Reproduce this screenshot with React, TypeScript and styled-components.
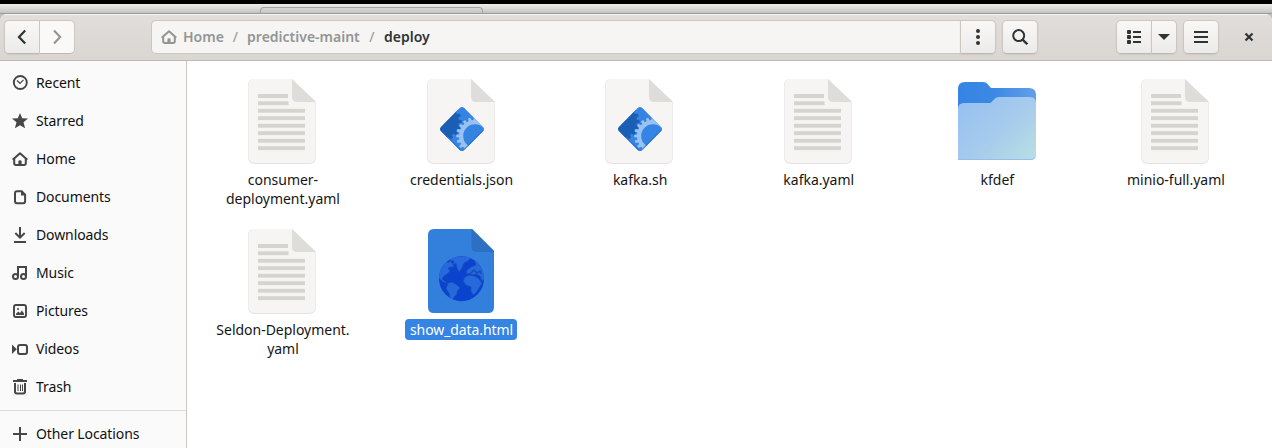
import React from 'react';
import styled, { createGlobalStyle, css } from 'styled-components';

const GlobalStyle = createGlobalStyle`
  * { box-sizing: border-box; }
  html, body { margin: 0; padding: 0; overflow: hidden; background: #000; }
  body { font-family: "Noto Sans", "Open Sans", sans-serif; font-size: 14px; color: #151515; }
`;

const Screen = styled.div`
  width: 1272px;
  height: 448px;
  padding-top: 4px;
  background: #000;
  display: flex;
  flex-direction: column;
  overflow: hidden;
`;

const Backdrop = styled.div`
  flex: 1;
  min-height: 0;
  display: flex;
  flex-direction: column;
  background: linear-gradient(#ececea 0, #dcdcda 4px, #c3c3c1 9px, #b5b5b3 20px);
`;

const BackTab = styled.div`
  height: 10px;
  flex: none;
  display: flex;
  align-items: flex-end;
  padding-left: 260px;
  border-bottom: 1px solid #9c9a97;

  &::before {
    content: "";
    width: 221px;
    height: 5px;
    border: 1px solid #a8a6a3;
    border-width: 1px 1px 0;
    border-radius: 4px 4px 0 0;
    background: linear-gradient(#d8d8d6, #c6c6c4);
  }
`;

const Window = styled.div`
  flex: 1;
  min-height: 0;
  display: flex;
  flex-direction: column;
  border-radius: 7px 7px 0 0;
  overflow: hidden;
  background: #fff;
`;

const HeaderBar = styled.header`
  height: 47px;
  flex: none;
  display: flex;
  align-items: flex-start;
  padding: 6px 10px 0 4px;
  border-bottom: 1px solid #bfb8b1;
  background: linear-gradient(#e1dedb, #dad6d2);
  box-shadow: inset 0 1px #f6f5f4;
`;

const ButtonGroup = styled.div<{ $gap?: number }>`
  display: flex;
  flex: none;
  margin-left: ${(p) => p.$gap ?? 0}px;
`;

const Button = styled.button<{ $w: number; $join?: 'left' | 'right'; $off?: boolean }>`
  width: ${(p) => p.$w}px;
  height: 34px;
  padding: 0;
  display: flex;
  align-items: center;
  justify-content: center;
  flex: none;
  border: 1px solid #cdc7c2;
  border-bottom-color: #bfb8b1;
  border-radius: 5px;
  color: ${(p) => (p.$off ? '#929595' : '#2e3436')};
  background: ${(p) => (p.$off ? '#faf9f8' : 'linear-gradient(#f9f8f7, #edebe9)')};
  box-shadow: ${(p) => (p.$off ? 'none' : '0 1px 2px rgba(0, 0, 0, 0.07)')};
  ${(p) => p.$join === 'left' && css`border-radius: 5px 0 0 5px; border-right-width: 0;`}
  ${(p) => p.$join === 'right' && css`border-radius: 0 5px 5px 0;`}
`;

const PathBar = styled.nav`
  width: 809px;
  height: 34px;
  display: flex;
  align-items: center;
  padding-left: 9px;
  border: 1px solid #cdc7c2;
  border-right: 0;
  border-radius: 5px 0 0 5px;
  background: #f6f5f4;
  color: #929595;
`;

const Crumb = styled.span<{ $gap?: number; $current?: boolean; $light?: boolean; $ls?: number }>`
  margin-left: ${(p) => p.$gap ?? 0}px;
  color: ${(p) => (p.$current ? '#2e3436' : 'inherit')};
  font-weight: ${(p) => (p.$light ? 400 : 600)};
  letter-spacing: ${(p) => p.$ls ?? 0}px;
  line-height: 20px;
`;

const Close = styled(ButtonGroup)`
  height: 34px;
  align-items: center;
  color: #2e3436;
`;

const Body = styled.div`
  flex: 1;
  min-height: 0;
  display: flex;
`;

const Sidebar = styled.aside`
  width: 187px;
  flex: none;
  padding-top: 3px;
  border-right: 1px solid #cdc7c2;
  background: #fafafa;
  overflow: hidden;
`;

const Place = styled.div`
  height: 38px;
  display: flex;
  align-items: center;
  gap: 8px;
  padding-left: 12px;
  color: #111;

  svg { color: #464646; flex: none; }
`;

const PlaceName = styled.span`
  padding-bottom: 2px;
  letter-spacing: -0.1px;
`;

const Divider = styled.div`
  height: 1px;
  margin: 4px 0;
  background: #dedede;
`;

const Files = styled.main`
  flex: 1;
  display: grid;
  grid-template-columns: repeat(6, 178.6px);
  grid-auto-rows: 150px;
  padding: 12px 0 0 6px;
  background: #fff;
`;

const FileItem = styled.figure`
  margin: 0;
  display: flex;
  flex-direction: column;
  align-items: center;

  svg { display: block; }
`;

const FileName = styled.figcaption<{ $selected?: boolean }>`
  margin-left: 0.3px;
  padding: 1px 4px 1px 5px;
  border-radius: 4px;
  text-align: center;
  line-height: 19px;
  white-space: pre-line;
  letter-spacing: ${(p) => (p.$selected ? -0.08 : -0.02)}px;
  color: ${(p) => (p.$selected ? '#fff' : '#151515')};
  background: ${(p) => (p.$selected ? '#3584e4' : 'transparent')};
`;

const glyphs = {
  back: <path d="M11.200 1.500 5 8l6.200 6.500" fill="none" stroke="currentColor" strokeWidth="2.200" />,
  forward: <path d="M5 1.500 11.200 8 5 14.500" fill="none" stroke="currentColor" strokeWidth="2.100" />,
  dots: (
    <g fill="currentColor">
      <circle cx="8" cy="2" r="2" /><circle cx="8" cy="8" r="2" /><circle cx="8" cy="14" r="2" />
    </g>
  ),
  search: (
    <g fill="none" stroke="currentColor">
      <circle cx="6.700" cy="6.600" r="5.500" strokeWidth="2" />
      <path d="M10.600 10.600 15.300 15.200" strokeWidth="2.400" />
    </g>
  ),
  list: (
    <g fill="currentColor">
      <rect x="1" y="1" width="4" height="4" rx="1" /><rect x="1" y="6" width="4" height="4" rx="1" />
      <rect x="1" y="11" width="4" height="4" rx="1" />
      <path d="M7 2h8v2H7zM7 7h8v2H7zM7 12h8v2H7z" />
    </g>
  ),
  down: <path d="M2 5h12L8 11z" fill="currentColor" />,
  menu: <path d="M1 2h14v2H1zM1 7h14v2H1zM1 12h14v2H1z" fill="currentColor" />,
  close: <path d="M4.500 4.500 11.500 11.500M11.500 4.500 4.500 11.500" stroke="currentColor" strokeWidth="2.200" fill="none" />,
  home: (
    <g fill="none" stroke="currentColor" strokeWidth="2">
      <path d="M.7 8.700 8 2.200l7.300 6.500" strokeLinejoin="round" />
      <path d="M2.200 8v4.300Q2.200 14 4 14h8q1.800 0 1.800-1.700V8" />
      <path d="M6.400 14v-3.500q0-1.200 1.600-1.200t1.600 1.200V14" fill="currentColor" stroke="none" />
    </g>
  ),
  recent: (
    <g fill="none" stroke="currentColor">
      <circle cx="8.300" cy="7.500" r="6.500" strokeWidth="1.900" />
      <path d="M5 5.500 8 8.300 11.500 4.800" strokeWidth="1.200" />
    </g>
  ),
  star: <path d="m8 0 2.200 5.300 5.800.3-4.500 3.700 1.600 6L8 12.200 2.900 15.300l1.600-6L0 5.600l5.800-.3z" fill="currentColor" />,
  documents: (
    <g>
      <path d="M5 1.900h4.700l3.400 3.400V12q0 2-2 2H5q-2 0-2-2V3.900q0-2 2-2z" transform="translate(0 .3)" fill="none" stroke="currentColor" strokeWidth="2" />
      <path d="M9 2v4.500h4z" fill="currentColor" />
    </g>
  ),
  downloads: <path d="M8 0v10M3.300 6 8 10.700 12.700 6M2 15h12" fill="none" stroke="currentColor" strokeWidth="2" />,
  music: (
    <g fill="none" stroke="currentColor" strokeWidth="2">
      <circle cx="3.500" cy="11.500" r="2.500" /><circle cx="11.500" cy="11.500" r="2.500" />
      <path d="M6 11.500V2h8v9.500" />
    </g>
  ),
  pictures: (
    <g>
      <rect x="2" y="2" width="12" height="12" rx="2" fill="none" stroke="currentColor" strokeWidth="1.900" />
      <path d="M4 12V10.800L6.300 8.600 8 10l2-2.500 2 3V12z" fill="currentColor" />
      <circle cx="6" cy="6" r="1" fill="currentColor" />
    </g>
  ),
  videos: (
    <g>
      <rect x="6" y="4" width="9" height="9" rx="2" fill="none" stroke="currentColor" strokeWidth="2" />
      <path d="M0 3.500 4.800 8.300 0 13z" fill="currentColor" />
    </g>
  ),
  trash: (
    <g fill="none" stroke="currentColor">
      <path d="M1 2h14" strokeWidth="2" /><path d="M5 .7h6" strokeWidth="1.400" />
      <path d="M3 4v8.500Q3 14.500 5 14.500h6q2 0 2-2V4" strokeWidth="2" />
      <path d="M6 5.500v6.500M8.500 5.500v6.500M10.500 5.500v6.500" strokeWidth="1" />
    </g>
  ),
  plus: <path d="M8 1v14M1 8h14" stroke="currentColor" strokeWidth="2" fill="none" />,
};

type GlyphName = keyof typeof glyphs;

const Glyph = ({ name }: { name: GlyphName }) => (
  <svg width="16" height="16" viewBox="0 0 16 16">{glyphs[name]}</svg>
);

const PAGE = 'M20 6H58L82 29V84Q82 91 75 91H21Q14 91 14 84V12Q14 6 20 6Z';
const FOLD = 'M58 6V24Q58 29 63 29H82Z';

const Page = ({ children }: { children: React.ReactNode }) => (
  <svg width="96" height="96" viewBox="0 0 96 96">
    <path d={PAGE} fill="#e4e3e1" />
    <path d="M20 6H58L81.500 28.500V83.500Q81.500 90 75 90H21Q14.500 90 14.500 83.500V12.500Q14.500 6.500 20 6Z" fill="#f6f5f4" />
    <path d={FOLD} fill="#deddda" />
    {children}
  </svg>
);

const TextIcon = () => (
  <Page>
    <g fill="#d5d4cf">
      <rect x="24" y="21" width="30" height="4" /><rect x="24" y="28.300" width="30.500" height="3.900" />
      {[35.8, 43.2, 50.8, 58.2, 65.8, 73.2].map((y) => (
        <rect key={y} x="24" y={y} width="47" height="3.900" />
      ))}
    </g>
  </Page>
);

const toothedRing = (cx: number, cy: number, inner: number, outer: number, count: number) => {
  const points: string[] = [];
  for (let i = 0; i < count; i++) {
    const steps: [number, number][] = [[-0.32, inner], [-0.22, outer], [0.22, outer], [0.32, inner]];
    steps.forEach(([offset, radius]) => {
      const a = ((i + offset) / count) * Math.PI * 2;
      points.push(`${(cx + Math.cos(a) * radius).toFixed(2)},${(cy + Math.sin(a) * radius).toFixed(2)}`);
    });
  }
  return points.join(' ');
};

const DIAMOND = 'M46.700 35.100Q49 32.800 51.300 35.100L70 53.900Q71.800 56 70 58.100L51.300 76.900Q49 79.200 46.700 76.900L28 58.100Q26.200 56 28 53.900Z';

const ScriptIcon = ({ id }: { id: string }) => (
  <Page>
    <clipPath id={id}><path d={DIAMOND} /></clipPath>
    <g clipPath={`url(#${id})`}>
      <rect x="24" y="32" width="50" height="48" fill="#3584e4" />
      <polygon points={toothedRing(29, 48.5, 16.8, 19.6, 18)} fill="#1a5fb4" />
      <polygon points={toothedRing(62, 63, 16, 18.8, 20)} fill="#99c1f1" />
      <circle cx="62" cy="63" r="11.800" fill="#3584e4" />
      <path d="M27 57 49 79 71 57" fill="none" stroke="#1c65c4" strokeWidth="1.600" opacity=".7" />
    </g>
  </Page>
);

const FolderIcon = () => (
  <svg width="96" height="96" viewBox="0 0 96 96">
    <defs>
      <linearGradient id="folderBack" x1="0" x2="1" y1="0" y2="0">
        <stop offset="0" stopColor="#3584e4" /><stop offset=".45" stopColor="#3c88e4" /><stop offset="1" stopColor="#629fea" />
      </linearGradient>
      <linearGradient id="folderFront" x1="0" x2="1" y1=".15" y2="1">
        <stop offset="0" stopColor="#98c1f1" /><stop offset=".5" stopColor="#a6cbec" /><stop offset="1" stopColor="#b9e0e4" />
      </linearGradient>
    </defs>
    <path d="M9 16Q9 9 16 9H34Q37 9 38.500 11L42 15H80Q87 15 87 22V45H9Z" fill="url(#folderBack)" />
    <path d="M9 36Q9 30 15 30H41.500L46 25.500Q47.500 24 50 24H81Q87 24 87 30V81Q87 87 81 87H9Z" fill="url(#folderFront)" />
    <path d="M9 86V87H81Q87 87 87 81V80Q87 86 81 86Z" fill="#96bdee" />
  </svg>
);

const WebIcon = () => (
  <svg width="96" height="96" viewBox="-1 0 96 96">
    <path d="M20 6H58L80 28V84Q80 90 74 90H20Q14 90 14 84V12Q14 6 20 6Z" fill="#337fdc" />
    <path d="M57.500 6V24Q57.500 29 62.500 29H80V28L58 6Z" fill="#2d70c2" />
    <clipPath id="globe"><circle cx="47.500" cy="55.700" r="22.500" /></clipPath>
    <g clipPath="url(#globe)">
      <rect x="24" y="33" width="48" height="48" fill="#0a43ce" />
      <g fill="#2569dc" stroke="#1b50b6" strokeWidth=".7">
        <path d="M28 41 33 37 34 40 36 38 39 41 40 44 36 44 34 45 36 48 33 51 30 53 28 56 33 60 29 59 24 54 22 47Z" />
        <path d="M33 37 39 33H59L54 38 50 40 48 45 45 49 43 45 42 40 39 42 40 38Z" />
        <path d="M34 60 38 59 43 62 46 65 43 68 43 71 40 74 39 78 36 75 35 70 32 66Z" />
        <path d="M52 51 53 47 57 44 62 42 60 37 65 41 70 49 72 55 68 58 66 53 62 51 58 52 56 50Z" />
        <path d="M51 54 55 52 60 53 64 55 68 60 65 65 62 70 59 72 57 68 57 64 52 62 49 58Z" />
      </g>
      <path d="M57 50 60 47 63 50 66 48 67 51" fill="none" stroke="#174db8" strokeWidth="1.500" />
    </g>
  </svg>
);

const places: { icon: GlyphName; label: string }[] = [
  { icon: 'recent', label: 'Recent' },
  { icon: 'star', label: 'Starred' },
  { icon: 'home', label: 'Home' },
  { icon: 'documents', label: 'Documents' },
  { icon: 'downloads', label: 'Downloads' },
  { icon: 'music', label: 'Music' },
  { icon: 'pictures', label: 'Pictures' },
  { icon: 'videos', label: 'Videos' },
  { icon: 'trash', label: 'Trash' },
];

const files: { name: string; kind: 'text' | 'script' | 'folder' | 'web' }[] = [
  { name: 'consumer-\ndeployment.yaml', kind: 'text' },
  { name: 'credentials.json', kind: 'script' },
  { name: 'kafka.sh', kind: 'script' },
  { name: 'kafka.yaml', kind: 'text' },
  { name: 'kfdef', kind: 'folder' },
  { name: 'minio-full.yaml', kind: 'text' },
  { name: 'Seldon-Deployment.\nyaml', kind: 'text' },
  { name: 'show_data.html', kind: 'web' },
];

const FileIcon = ({ kind, id }: { kind: string; id: string }) => {
  if (kind === 'script') return <ScriptIcon id={id} />;
  if (kind === 'folder') return <FolderIcon />;
  if (kind === 'web') return <WebIcon />;
  return <TextIcon />;
};

export default function App() {
  return (
    <Screen>
      <GlobalStyle />
      <Backdrop>
        <BackTab />
        <Window>
          <HeaderBar>
            <ButtonGroup>
              <Button $w={35} $join="left"><Glyph name="back" /></Button>
              <Button $w={36} $join="right" $off><Glyph name="forward" /></Button>
            </ButtonGroup>
            <ButtonGroup $gap={76}>
              <PathBar>
                <Glyph name="home" />
                <Crumb $gap={6}>Home</Crumb>
                <Crumb $gap={9} $light>/</Crumb>
                <Crumb $gap={9}>predictive-maint</Crumb>
                <Crumb $gap={9.500} $light>/</Crumb>
                <Crumb $gap={9.500} $current>deploy</Crumb>
              </PathBar>
              <Button $w={36} $join="right"><Glyph name="dots" /></Button>
            </ButtonGroup>
            <ButtonGroup $gap={6}>
              <Button $w={36}><Glyph name="search" /></Button>
            </ButtonGroup>
            <ButtonGroup $gap={78}>
              <Button $w={35} $join="left"><Glyph name="list" /></Button>
              <Button $w={26} $join="right"><Glyph name="down" /></Button>
            </ButtonGroup>
            <ButtonGroup $gap={6}>
              <Button $w={36}><Glyph name="menu" /></Button>
            </ButtonGroup>
            <Close $gap={22}><Glyph name="close" /></Close>
          </HeaderBar>
          <Body>
            <Sidebar>
              {places.map((p) => (
                <Place key={p.label}><Glyph name={p.icon} /><PlaceName>{p.label}</PlaceName></Place>
              ))}
              <Divider />
              <Place><Glyph name="plus" /><PlaceName>Other Locations</PlaceName></Place>
            </Sidebar>
            <Files>
              {files.map((f, i) => (
                <FileItem key={f.name}>
                  <FileIcon kind={f.kind} id={`diamond${i}`} />
                  <FileName $selected={f.kind === 'web'}>{f.name}</FileName>
                </FileItem>
              ))}
            </Files>
          </Body>
        </Window>
      </Backdrop>
    </Screen>
  );
}
